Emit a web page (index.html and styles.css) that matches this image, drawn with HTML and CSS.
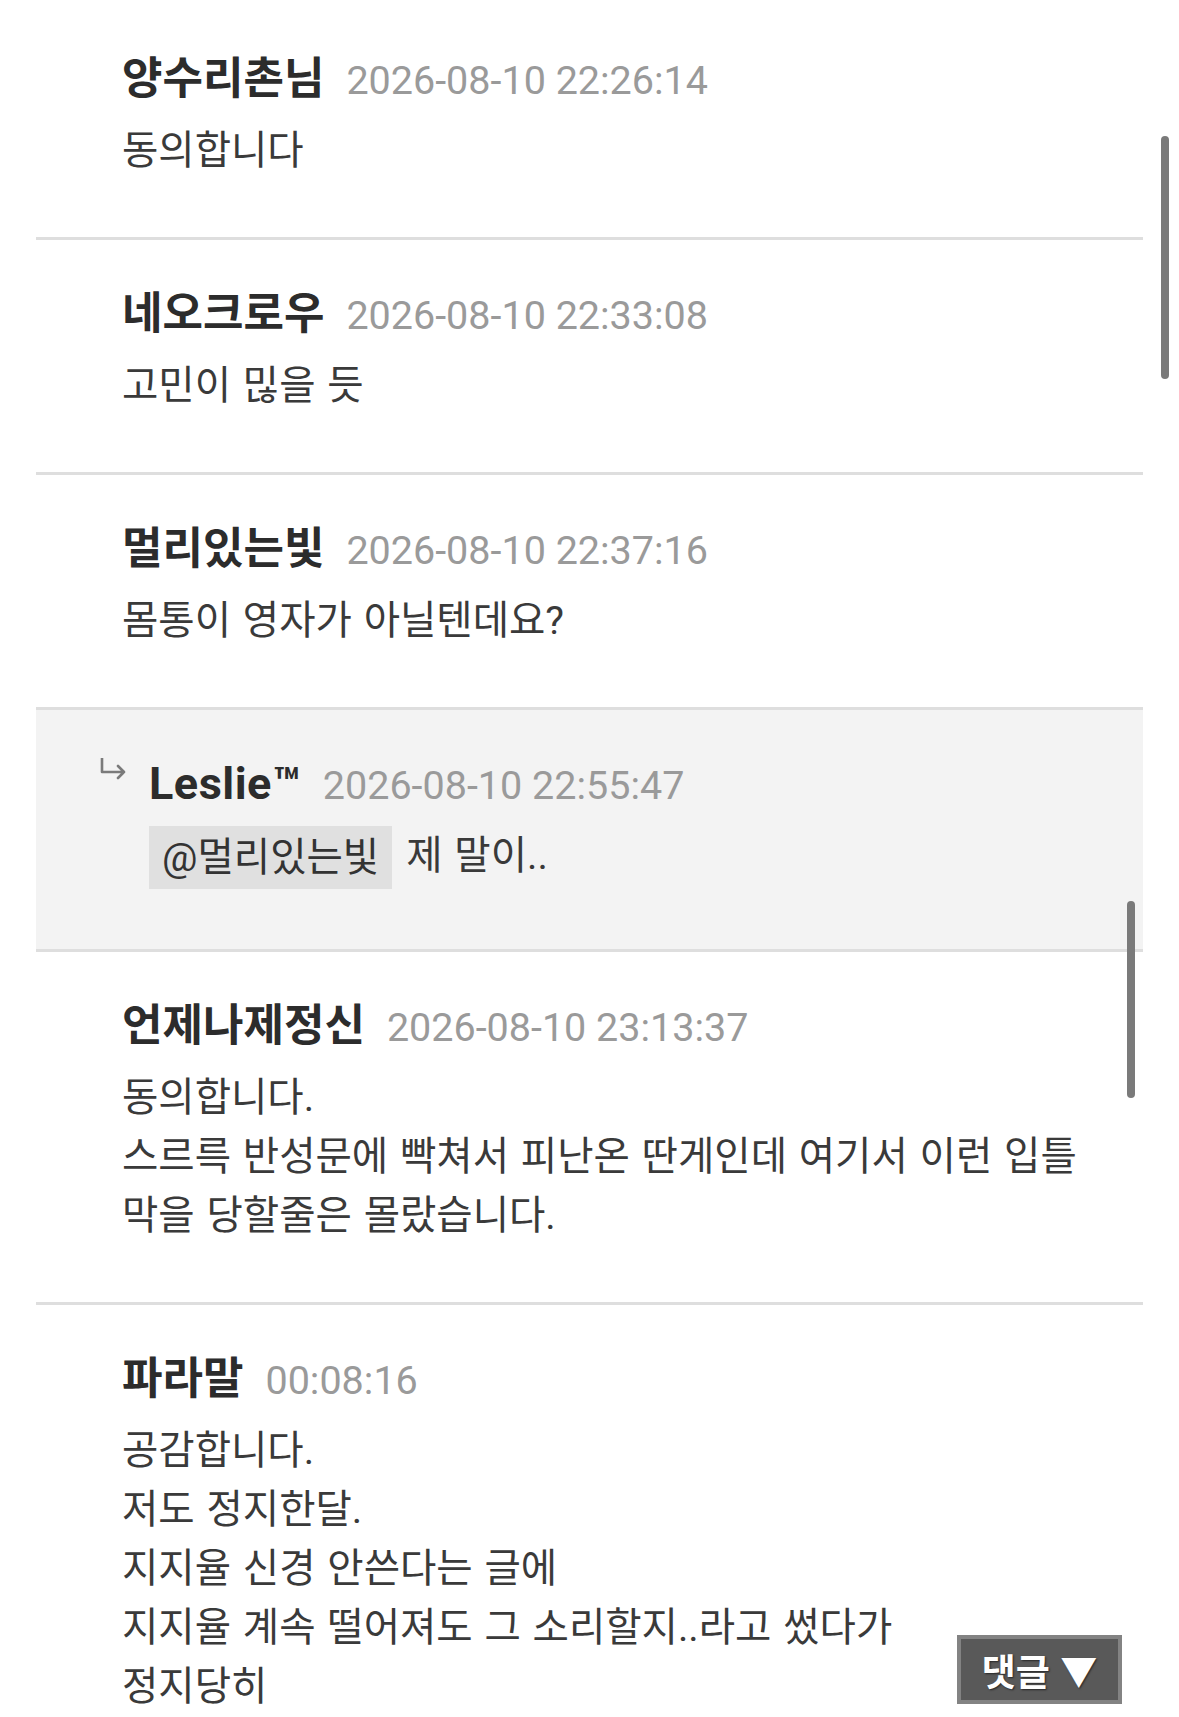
FILE: index.html
```html
<!DOCTYPE html>
<html lang="ko">
<head>
  <meta charset="UTF-8" />
  <title>댓글</title>
  <link rel="stylesheet" href="styles.css">
</head>
<body>

<div class="page">
  <ul class="comments">
    <li class="comment">
      <div class="meta"><span class="nick">양수리촌님</span><span class="date">2026-08-10 22:26:14</span></div>
      <div class="text">동의합니다</div>
    </li>
    <li class="comment">
      <div class="meta"><span class="nick">네오크로우</span><span class="date">2026-08-10 22:33:08</span></div>
      <div class="text">고민이 믾을 듯</div>
    </li>
    <li class="comment">
      <div class="meta"><span class="nick">멀리있는빛</span><span class="date">2026-08-10 22:37:16</span></div>
      <div class="text">몸통이 영자가 아닐텐데요?</div>
    </li>
    <li class="comment reply">
      <div class="meta">
        <svg class="reply-arrow" viewBox="0 0 28 22" width="28" height="22">
          <path d="M3 0 V14 H25 M19 8 L25 14 L19 20" fill="none" stroke="#7a7a7a" stroke-width="2.6" stroke-linejoin="round" stroke-linecap="round"/>
        </svg>
        <span class="nick latin">Leslie™</span><span class="date">2026-08-10 22:55:47</span>
      </div>
      <div class="text"><span class="mention">@멀리있는빛</span>제 말이..</div>
    </li>
    <li class="comment">
      <div class="meta"><span class="nick">언제나제정신</span><span class="date">2026-08-10 23:13:37</span></div>
      <div class="text">동의합니다.<br>스르륵 반성문에 빡쳐서 피난온 딴게인데 여기서 이런 입틀<br>막을 당할줄은 몰랐습니다.</div>
    </li>
    <li class="comment">
      <div class="meta"><span class="nick">파라말</span><span class="date">00:08:16</span></div>
      <div class="text">공감합니다.<br>저도 정지한달.<br>지지율 신경 안쓴다는 글에<br>지지율 계속 떨어져도 그 소리할지..라고 썼다가<br>정지당히</div>
    </li>
  </ul>

  <div class="scrollbar list-bar"></div>
  <div class="scrollbar page-bar"></div>

  <button class="comment-btn">댓글 ▼</button>
</div>

</body>
</html>
```

FILE: styles.css
```css
html, body {
  margin: 0;
  height: 100%;
  overflow: hidden;
  background: #fff;
}

body {
  font-family: Roboto, "Noto Sans CJK KR", sans-serif;
  color: #333;
}

.page {
  position: relative;
  height: 1717px;
}

.comments {
  list-style: none;
  margin: 5px 36px 0 36px;
  padding: 0;
}

.comment {
  padding: 44px 20px 57px 86px;
  border-bottom: 3px solid #dedede;
}

.meta {
  display: flex;
  align-items: baseline;
  height: 60px;
  line-height: 60px;
}

.nick {
  font-size: 44px;
  font-weight: 700;
  color: #2c2c2c;
}
.nick.latin {
  font-size: 45px;
  letter-spacing: 0.5px;
}

.date {
  margin-left: 22px;
  font-size: 39.5px;
  color: #9a9a9a;
}

.text {
  margin-top: 12px;
  font-size: 39.5px;
  line-height: 59px;
  color: #3a3a3a;
  word-spacing: 2px;
  white-space: nowrap;
}

/* reply row */
.reply {
  background: #f3f3f3;
  padding-left: 113px;
  padding-bottom: 60px;
}
.reply-arrow {
  align-self: flex-start;
  margin: 4px 22px 0 -50px;
  flex-shrink: 0;
}
.mention {
  display: inline-block;
  background: #e0e0e0;
  padding: 0 13px;
  height: 63px;
  line-height: 63px;
  margin-right: 14px;
  vertical-align: top;
  color: #333;
}

.scrollbar {
  position: absolute;
  width: 8px;
  border-radius: 4px;
  background: #7a7a7a;
}
.list-bar {
  left: 1127px;
  top: 896px;
  height: 197px;
}
.page-bar {
  left: 1161px;
  top: 131px;
  height: 243px;
}

.comment-btn {
  position: absolute;
  left: 957px;
  top: 1630px;
  width: 165px;
  height: 69px;
  padding: 0;
  background: #595959;
  border: 4px solid #838383;
  color: #fff;
  font-family: "Noto Sans CJK KR", sans-serif;
  font-size: 37px;
  font-weight: 700;
  text-shadow: 1px 1px 2px rgba(0,0,0,0.6);
}
```
